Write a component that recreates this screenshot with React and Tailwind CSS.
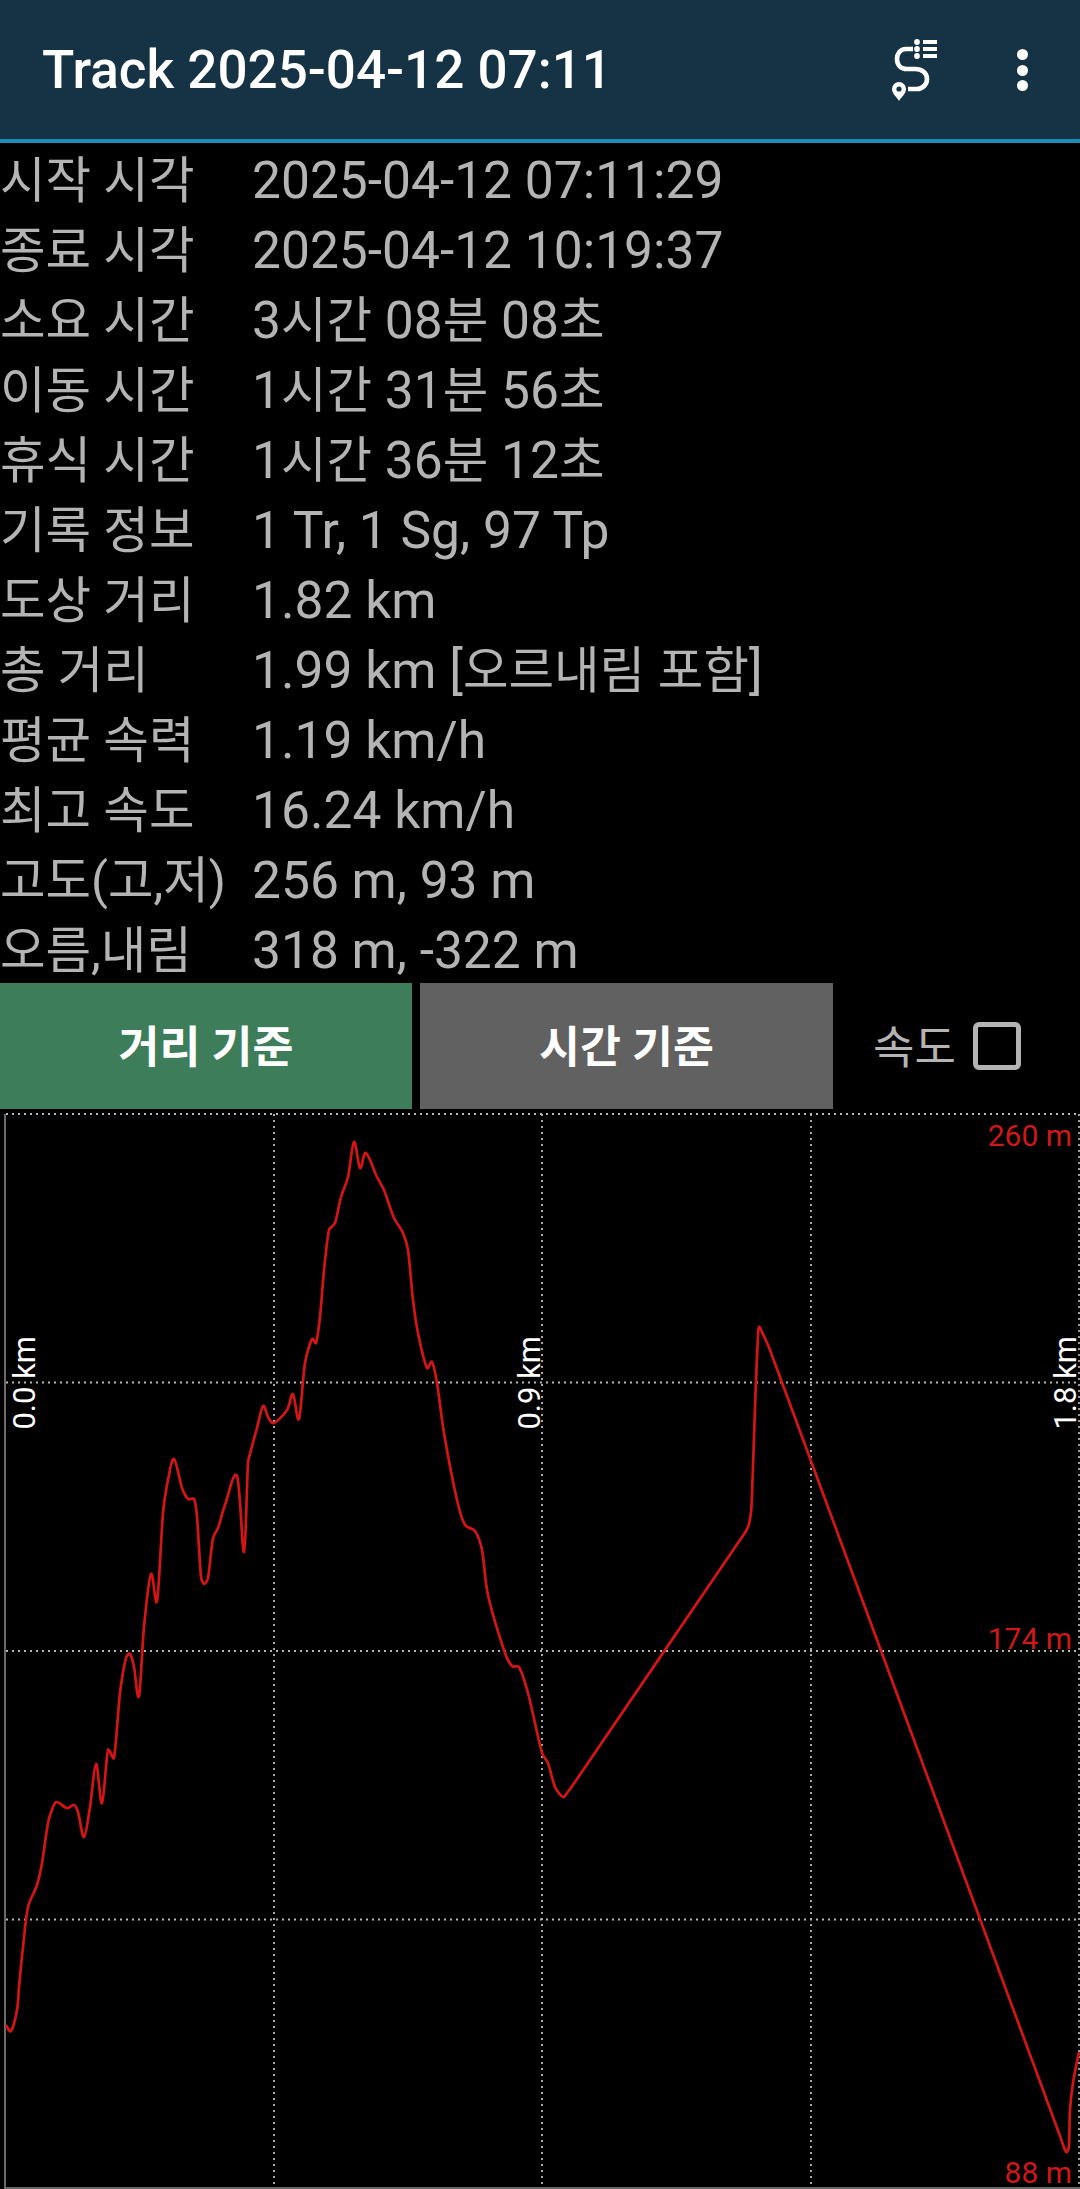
import React from "react";

const rows = [
  ["시작 시각", "2025-04-12 07:11:29"],
  ["종료 시각", "2025-04-12 10:19:37"],
  ["소요 시간", "3시간 08분 08초"],
  ["이동 시간", "1시간 31분 56초"],
  ["휴식 시간", "1시간 36분 12초"],
  ["기록 정보", "1 Tr, 1 Sg, 97 Tp"],
  ["도상 거리", "1.82 km"],
  ["총 거리", "1.99 km [오르내림 포함]"],
  ["평균 속력", "1.19 km/h"],
  ["최고 속도", "16.24 km/h"],
  ["고도(고,저)", "256 m, 93 m"],
  ["오름,내림", "318 m, -322 m"],
];

const TOP = 1109;
const pts = [
  [6,2025],[11,2031],[17,2010],[19,1987],[23,1947],[28,1907],[37,1885],[42,1863],[48,1823],[53,1807],[57,1802],[67,1808],[74,1805],[78,1812],[84,1837],[90,1807],[96,1764],[102,1803],[108,1750],[114,1758],[120,1693],[126,1658],[130,1654],[134,1667],[139,1696],[144,1627],[151,1574],[157,1601],[163,1513],[168,1480],[174,1459],[182,1488],[188,1499],[194,1499],[197,1517],[201,1577],[204,1584],[208,1578],[213,1538],[218,1528],[225,1505],[237,1476],[244,1552],[248,1463],[251,1450],[257,1428],[263,1406],[268,1417],[274,1423],[287,1410],[293,1394],[299,1419],[305,1363],[312,1339],[316,1343],[320,1317],[324,1270],[329,1230],[335,1223],[341,1197],[348,1177],[354,1142],[360,1168],[366,1153],[377,1177],[384,1190],[394,1218],[403,1233],[408,1250],[413,1300],[418,1333],[427,1368],[432,1362],[437,1383],[444,1433],[457,1500],[465,1525],[475,1531],[482,1550],[488,1595],[505,1653],[512,1666],[519,1667],[528,1693],[542,1753],[548,1763],[555,1787],[563,1797],[567,1793],[575,1782],[740,1540],[746,1531],[749,1524],[751,1512],[752,1495],[756,1380],[758,1335],[759,1327],[761,1330],[770,1350],[1060,2136],[1065,2150],[1067,2152],[1069,2146],[1070,2110],[1073,2083],[1079,2052],
];

function smooth(p) {
  const handle = (from, to, max) => {
    const dx = (to[0] - from[0]) / 6, dy = (to[1] - from[1]) / 6, l = Math.hypot(dx, dy) || 1;
    const k = Math.min(1, max / l);
    return [dx * k, dy * k];
  };
  let d = `M${p[0][0]} ${p[0][1] - TOP}`;
  for (let i = 0; i < p.length - 1; i++) {
    const a = p[Math.max(i - 1, 0)], b = p[i], c = p[i + 1], e = p[Math.min(i + 2, p.length - 1)];
    const max = Math.hypot(c[0] - b[0], c[1] - b[1]) / 3;
    const t1 = handle(a, c, max), t2 = handle(b, e, max);
    const c1x = b[0] + t1[0], c1y = b[1] + t1[1];
    const c2x = c[0] - t2[0], c2y = c[1] - t2[1];
    d += `C${c1x.toFixed(1)} ${(c1y - TOP).toFixed(1)} ${c2x.toFixed(1)} ${(c2y - TOP).toFixed(1)} ${c[0]} ${c[1] - TOP}`;
  }
  return d;
}

function Value({ text }) {
  return text.split(/([\uAC00-\uD7A3]+)/).map((part, i) =>
    i % 2 === 1 ? (
      <span key={i} className="text-[49.5px]">{part}</span>
    ) : (
      part
    )
  );
}

function RouteIcon() {
  return (
    <svg width="52" height="72" viewBox="890 36 52 72" className="block">
      <path d="M913 49H906C900 49 897 54 897 59C897 65 901 69 907 69H915C922 69 927 73 927 79C927 85 922 89 917 89H908" fill="none" stroke="#fff" strokeWidth="4.6" />
      <circle cx="917" cy="42" r="2.9" fill="#fff" />
      <circle cx="917" cy="49" r="2.9" fill="#fff" />
      <circle cx="917" cy="56" r="2.9" fill="#fff" />
      <path d="M923 42h14M923 49h14M923 56h14" stroke="#fff" strokeWidth="4" />
      <path d="M899 101c-2-4-7-7-7-12a7 7 0 0 1 14 0c0 5-5 8-7 12z" fill="#fff" />
      <circle cx="899" cy="89" r="2.6" fill="#153345" />
    </svg>
  );
}

function Chart() {
  const xs = [274, 542, 811];
  const ys = [1114, 1382.5, 1651, 1919.5];
  return (
    <svg width="1080" height="1080" viewBox="0 0 1080 1080" className="block absolute inset-0">
      {ys.map((y) => (
        <line key={y} x1="6" x2="1080" y1={y - TOP} y2={y - TOP} stroke="#b8b8b8" strokeWidth="1.8" strokeDasharray="2 4" />
      ))}
      {xs.map((x) => (
        <line key={x} x1={x} x2={x} y1="5" y2="1078" stroke="#b8b8b8" strokeWidth="1.8" strokeDasharray="2 4" />
      ))}
      <line x1="1079" x2="1079" y1="5" y2="1078" stroke="#9a9a9a" strokeWidth="2" strokeDasharray="2 4" />
      <line x1="5" x2="5" y1="5" y2="1080" stroke="#6a6a6a" strokeWidth="2" />
      <line x1="4" x2="1080" y1="1079" y2="1079" stroke="#6a6a6a" strokeWidth="2" />
      <path d={smooth(pts)} fill="none" stroke="#d41515" strokeWidth="2.7" strokeLinejoin="round" />
    </svg>
  );
}

const axisClass = "absolute text-[31px] leading-[26px] text-white [writing-mode:vertical-rl] rotate-180 whitespace-nowrap";
const elevClass = "absolute right-[8px] text-[30px] leading-[30px] text-[#cf1818] whitespace-nowrap";

export default function App() {
  return (
    <div className="w-[1080px] h-[2189px] bg-black flex flex-col overflow-hidden font-['Roboto','Noto_Sans_CJK_KR',sans-serif]">
      <header className="h-[143px] shrink-0 bg-[#153345] border-b-[4px] border-[#1c8cb8] flex items-center pl-[42px]">
        <h1 className="text-[53px] font-medium text-white leading-none grow mt-[2px]">Track 2025-04-12 07:11</h1>
        <div className="mr-[75px] mt-[5px]"><RouteIcon /></div>
        <div className="mr-[52px] flex flex-col gap-[4.6px] mt-[1px]">
          <span className="block w-[11px] h-[11px] rounded-full bg-white" />
          <span className="block w-[11px] h-[11px] rounded-full bg-white" />
          <span className="block w-[11px] h-[11px] rounded-full bg-white" />
        </div>
      </header>
      <section className="h-[840px] shrink-0">
        {rows.map(([k, v]) => (
          <div key={k} className="h-[70px] flex leading-[76px] text-[#b4b4b4] whitespace-nowrap">
            <span className="w-[252px] shrink-0 text-[49.5px]">{k}</span>
            <span className="text-[51.5px]"><Value text={v} /></span>
          </div>
        ))}
      </section>
      <section className="h-[126px] shrink-0 flex">
        <button className="w-[412px] pt-[5px] bg-[#3d7d5a] text-white font-bold text-[44.5px]">거리 기준</button>
        <button className="w-[413px] pt-[5px] ml-[8px] bg-[#616161] text-white font-bold text-[44.5px]">시간 기준</button>
        <div className="flex items-center ml-[40px]">
          <span className="pt-[5px] text-[45px] text-[#b4b4b4]">속도</span>
          <span className="block w-[48px] h-[48px] ml-[17px] border-[5px] border-[#b4b4b4] rounded-[6px]" />
        </div>
      </section>
      <section className="relative h-[1080px] shrink-0">
        <Chart />
        <span className={axisClass} style={{ left: 12, top: 227 }}>0.0 km</span>
        <span className={axisClass} style={{ left: 517, top: 227 }}>0.9 km</span>
        <span className={axisClass} style={{ left: 1053, top: 227 }}>1.8 km</span>
        <span className={elevClass} style={{ top: 12 }}>260 m</span>
        <span className={elevClass} style={{ top: 515 }}>174 m</span>
        <span className={elevClass} style={{ top: 1049 }}>88 m</span>
      </section>
    </div>
  );
}
